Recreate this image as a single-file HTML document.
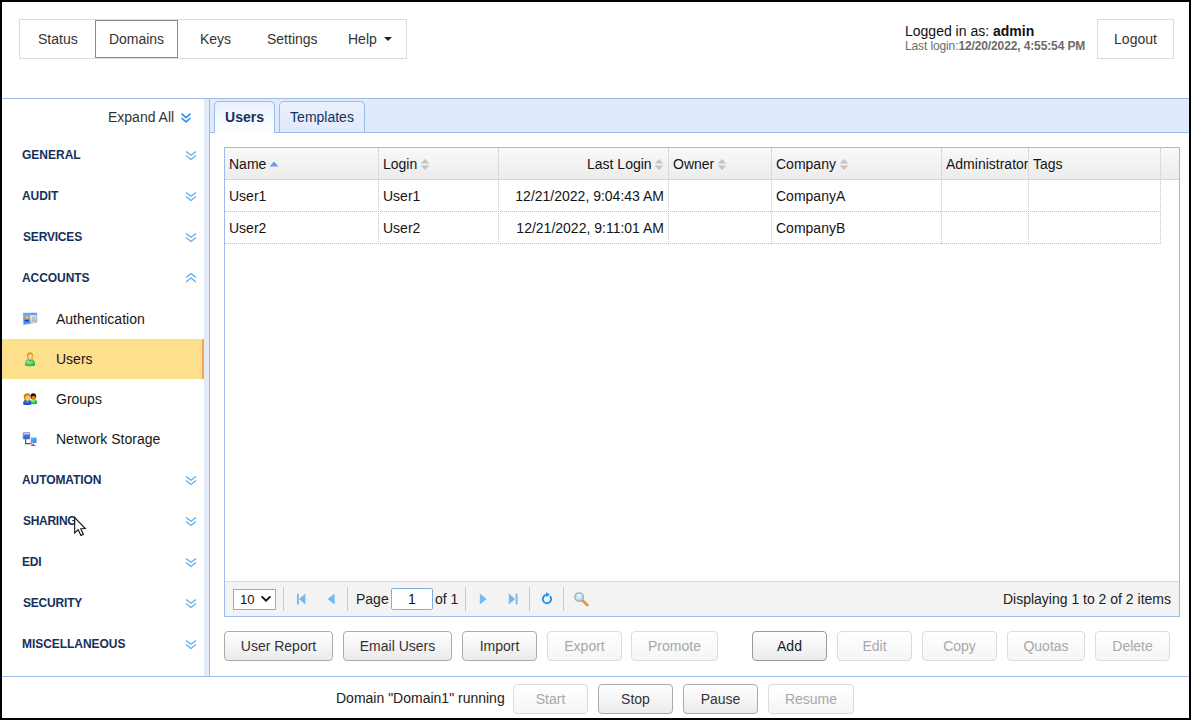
<!DOCTYPE html>
<html><head><meta charset="utf-8">
<style>
*{box-sizing:border-box;margin:0;padding:0}
html,body{width:1191px;height:720px;overflow:hidden;background:#fff}
body{font-family:"Liberation Sans",sans-serif;font-size:14px;color:#222;position:relative}
.abs{position:absolute}
#frame{position:absolute;left:0;top:0;width:1191px;height:720px;border:2px solid #000;z-index:50;pointer-events:none}
/* top nav */
#nav{left:19px;top:19px;width:388px;height:40px;border:1px solid #dcdcdc;background:#fff}
.nv{position:absolute;top:0;height:38px;line-height:38px;font-size:14px;color:#333;white-space:nowrap}
#dom{left:95px;top:20px;width:83px;height:38px;border:1px solid #8a8a8a;background:#fff;line-height:36px;text-align:center;font-size:14px;color:#333}
#logout{left:1097px;top:19px;width:77px;height:40px;border:1px solid #dcdcdc;line-height:38px;text-align:center;font-size:14px;color:#333}
#li1{left:905px;top:23px;font-size:14px;color:#111;white-space:nowrap;line-height:16px}
#li2{left:905px;top:39px;font-size:12px;color:#6c6c6c;white-space:nowrap;line-height:14px;letter-spacing:-0.12px}
/* lines */
#hline{left:2px;top:98px;width:1187px;height:1px;background:#9dbaec}
#split{left:204px;top:99px;width:5px;height:577px;background:#e3eaf8}
#vline{left:209px;top:99px;width:1px;height:577px;background:#9dbaec}
#fline{left:2px;top:676px;width:1187px;height:1px;background:#9dbaec}
/* sidebar */
.sec{position:absolute;left:22px;font-size:12px;font-weight:bold;color:#15305b;letter-spacing:0;white-space:nowrap;line-height:14px}
.item{position:absolute;left:56px;font-size:14px;color:#161616;white-space:nowrap;line-height:16px}
#sel{left:2px;top:339px;width:202px;height:40px;background:#fddf8c;border-right:2px solid #f9a44a}
.chev{position:absolute;left:185px;width:12px;height:12px}
/* tabs */
#strip{left:210px;top:99px;width:979px;height:33px;background:#dfeafc}
#strip2{left:210px;top:132px;width:979px;height:1px;background:#9dbaec}
.tab{position:absolute;top:101px;height:32px;border:1px solid #9dbaec;border-bottom:none;border-radius:5px 5px 0 0;font-size:14px;line-height:30px;text-align:center}
#t1{left:214px;width:61px;background:linear-gradient(#eaf1fd,#fff);font-weight:bold;color:#15305b;height:32px}
#t2{left:279px;width:86px;background:linear-gradient(#eaf1fd,#dfeafc);color:#15305b;height:31px}
/* grid */
#grid{left:224px;top:147px;width:956px;height:470px;border:1px solid #9dbaec;background:#fff}
#gh{left:225px;top:148px;width:954px;height:32px;background:linear-gradient(#f9f9f9,#ececec);border-bottom:1px solid #d5d5d5}
.th,.td{position:absolute;font-size:14px;color:#141414;white-space:nowrap;line-height:16px}
.vd{position:absolute;top:148px;width:0;height:96px;border-left:1px dotted #c4c4c4}
.hd{position:absolute;left:225px;width:936px;height:0;border-top:1px dotted #c4c4c4}
#pager{left:225px;top:581px;width:954px;height:35px;background:#f3f3f3;border-top:1px solid #dcdcdc}
.psep{position:absolute;top:587px;width:1px;height:24px;background:#c9c9c9}
.btn{position:absolute;height:30px;border:1px solid #ababab;border-radius:4px;background:linear-gradient(#fff,#ebebeb);font-size:14px;color:#333;text-align:center;line-height:29px;white-space:nowrap}
.btn.dis{border-color:#dcdcdc;color:#a8a8a8;background:linear-gradient(#fff,#f5f5f5)}
</style></head><body>
<div id="frame"></div>
<div id="nav" class="abs"></div>
<div class="nv" style="left:38px;top:20px">Status</div>
<div id="dom" class="abs">Domains</div>
<div class="nv" style="left:200px;top:20px">Keys</div>
<div class="nv" style="left:267px;top:20px">Settings</div>
<div class="nv" style="left:348px;top:20px">Help</div>
<div class="abs" style="left:384px;top:37px;width:0;height:0;border-left:4px solid transparent;border-right:4px solid transparent;border-top:4px solid #222"></div>
<div id="li1" class="abs">Logged in as: <b>admin</b></div>
<div id="li2" class="abs">Last login:<b>12/20/2022, 4:55:54 PM</b></div>
<div id="logout" class="abs">Logout</div>
<div id="hline" class="abs"></div>
<div id="split" class="abs"></div>
<div id="vline" class="abs"></div>
<div id="fline" class="abs"></div>

<div class="abs" style="left:108px;top:109px;font-size:14px;color:#333;line-height:16px">Expand All</div>
<div class="sec" style="top:148px">GENERAL</div>
<div class="sec" style="top:189px;letter-spacing:-0.1px">AUDIT</div>
<div class="sec" style="top:230px;left:23px;letter-spacing:-0.19px">SERVICES</div>
<div class="sec" style="top:271px;letter-spacing:-0.07px">ACCOUNTS</div>
<div id="sel" class="abs"></div>
<div class="item" style="top:311px">Authentication</div>
<div class="item" style="top:351px">Users</div>
<div class="item" style="top:391px">Groups</div>
<div class="item" style="top:431px">Network Storage</div>
<div class="sec" style="top:473px;letter-spacing:-0.1px">AUTOMATION</div>
<div class="sec" style="top:514px;left:23px;letter-spacing:-0.29px">SHARING</div>
<div class="sec" style="top:555px;letter-spacing:-0.27px">EDI</div>
<div class="sec" style="top:596px;left:23px;letter-spacing:-0.2px">SECURITY</div>
<div class="sec" style="top:637px;letter-spacing:-0.05px">MISCELLANEOUS</div>

<div id="strip" class="abs"></div>
<div id="strip2" class="abs"></div>
<div id="t1" class="tab">Users</div>
<div id="t2" class="tab">Templates</div>

<div id="grid" class="abs"></div>
<div id="gh" class="abs"></div>
<div id="pager" class="abs"></div>


<!-- sidebar icons -->
<svg class="abs" style="left:22px;top:311px" width="17" height="16" viewBox="0 0 17 16">
 <defs><linearGradient id="ga" x1="0" y1="0" x2="0" y2="1"><stop offset="0" stop-color="#8cc0fb"/><stop offset="1" stop-color="#3e82e6"/></linearGradient>
 <linearGradient id="gp" x1="0" y1="0" x2="1" y2="1"><stop offset="0" stop-color="#ffffff"/><stop offset="1" stop-color="#bdbdbd"/></linearGradient></defs>
 <path d="M1.3 2.2 L14.8 2 L14.9 11 L8 12.4 L1.6 13.6 Z" fill="url(#ga)" stroke="#6aa5f3" stroke-width=".6"/>
 <path d="M1.3 2.2 L14.8 2 L14.8 3.6 L1.3 3.8 Z" fill="#5b9cf3"/>
 <rect x="8.3" y="4.4" width="6.2" height="7.4" fill="url(#gp)"/>
 <path d="M9.5 6.3 H13 M9.5 8 H13 M9.5 9.7 H13" stroke="#9a9a9a" stroke-width=".8"/>
 <circle cx="4.9" cy="6.6" r="1.9" fill="#f59a12"/>
 <circle cx="5.2" cy="6.6" r="1" fill="#ffd089"/>
 <path d="M2.4 10.5 Q2.6 8.6 4.9 8.6 Q7.2 8.6 7.4 10.5 Z" fill="#1144b8"/>
</svg>
<svg class="abs" style="left:23px;top:350px" width="14" height="18" viewBox="0 0 14 18">
 <defs><radialGradient id="gb" cx=".4" cy=".35" r=".8"><stop offset="0" stop-color="#8ff59a"/><stop offset=".6" stop-color="#3fc355"/><stop offset="1" stop-color="#169a2c"/></radialGradient>
 <radialGradient id="gf" cx=".45" cy=".4" r=".7"><stop offset="0" stop-color="#ffe0c4"/><stop offset="1" stop-color="#f9a868"/></radialGradient></defs>
 <path d="M2 15.4 Q1.6 10 5 9.3 L9 9.3 Q12.4 10 12 15.4 Q7 17 2 15.4 Z" fill="url(#gb)"/>
 <path d="M4.6 9.4 L7 11.2 L9.4 9.4 L8.6 8.6 L5.4 8.6 Z" fill="#1f9e35"/>
 <ellipse cx="7" cy="5.9" rx="3.1" ry="3.6" fill="#d9a10c"/>
 <ellipse cx="7.3" cy="6.9" rx="2.3" ry="2.9" fill="url(#gf)"/>
 <path d="M5.6 9 L7 10.6 L8.4 9 Z" fill="#f7a461"/>
</svg>
<svg class="abs" style="left:22px;top:391px" width="17" height="16" viewBox="0 0 17 16">
 <defs><radialGradient id="gg2" cx=".4" cy=".3" r=".8"><stop offset="0" stop-color="#8ff59a"/><stop offset=".6" stop-color="#36c04c"/><stop offset="1" stop-color="#12922a"/></radialGradient>
 <radialGradient id="gbl" cx=".5" cy=".3" r=".8"><stop offset="0" stop-color="#3d7fe6"/><stop offset="1" stop-color="#0a3fb4"/></radialGradient></defs>
 <path d="M8.2 12.6 Q8 8.6 10.2 8.2 L13 8.2 Q15.3 8.6 15.1 12.6 Q11.6 13.8 8.2 12.6 Z" fill="url(#gg2)"/>
 <ellipse cx="11.3" cy="5.3" rx="2.8" ry="3" fill="#16161c"/>
 <ellipse cx="11.5" cy="6.5" rx="2" ry="2.2" fill="#d98a10"/>
 <path d="M8.8 4.6 Q11.3 2.6 14 4.8 L13.7 5.5 Q11.5 4.2 9.1 5.6 Z" fill="#0d0d12"/>
 <path d="M1.2 13.4 Q0.8 9.2 3.6 8.7 L6.8 8.7 Q9.6 9.2 9.2 13.4 Q5.2 14.8 1.2 13.4 Z" fill="url(#gbl)"/>
 <ellipse cx="5.2" cy="5.9" rx="3.5" ry="3.7" fill="#c98a0c"/>
 <ellipse cx="5.7" cy="6.9" rx="2.3" ry="2.5" fill="#ffc58f"/>
 <path d="M4.6 8.9 L5.6 10.6 L6.6 8.9 Z" fill="#f9a45e"/>
 <path d="M5 9.6 L5.6 11.4 L6.2 9.6 Z" fill="#bfe6ff"/>
</svg>
<svg class="abs" style="left:22px;top:430px" width="17" height="18" viewBox="0 0 17 18">
 <defs><linearGradient id="gs" x1="0" y1="0" x2="0" y2="1"><stop offset="0" stop-color="#9fb6ee"/><stop offset=".35" stop-color="#3b7de0"/><stop offset="1" stop-color="#2a64cf"/></linearGradient>
 <linearGradient id="gm" x1="0" y1="0" x2="1" y2="1"><stop offset="0" stop-color="#6cc0ff"/><stop offset="1" stop-color="#1c7af0"/></linearGradient></defs>
 <path d="M3.6 8.5 V13.6 H10" fill="none" stroke="#5a5a5a" stroke-width="1.2"/>
 <rect x="1.2" y="2.6" width="6.6" height="6.4" rx=".6" fill="url(#gs)" stroke="#7a6fc0" stroke-width=".7"/>
 <rect x="1.6" y="2.9" width="5.8" height="1.5" fill="#c9cff2"/>
 <rect x="10.4" y="13.4" width="1.6" height="2" fill="#777"/>
 <rect x="9" y="15.1" width="4.6" height="1" rx=".5" fill="#6a6a6a"/>
 <rect x="8.3" y="7.3" width="6.6" height="6.2" rx=".5" fill="#d8d2cc"/>
 <rect x="8.9" y="7.9" width="5.4" height="4.8" fill="url(#gm)"/>
</svg>
<!-- cursor -->
<svg class="abs" style="left:73px;top:516px;z-index:40" width="15" height="23" viewBox="0 0 15 23">
 <path d="M1.7 1.6 L1.7 16.9 L5.2 13.7 L7.9 19.6 L10.4 18.5 L7.8 12.7 L12.3 12.6 Z" fill="#fff" stroke="#111" stroke-width="1.1" stroke-linejoin="miter"/>
</svg>
<!-- chevrons -->
<svg class="chev" style="top:111.5px;left:180px" viewBox="0 0 12 12"><path d="M1.5 1.7 L6 5.6 L10.5 1.7 M1.5 6 L6 9.9 L10.5 6" fill="none" stroke="#2d8be6" stroke-width="1.6"/></svg>
<svg class="chev" style="top:149px" viewBox="0 0 12 12"><path d="M1 2.5 L6 6.3 L11 2.5 M1 6.6 L6 10.4 L11 6.6" fill="none" stroke="#5aabf0" stroke-width="1.2"/></svg>
<svg class="chev" style="top:190px" viewBox="0 0 12 12"><path d="M1 2.5 L6 6.3 L11 2.5 M1 6.6 L6 10.4 L11 6.6" fill="none" stroke="#5aabf0" stroke-width="1.2"/></svg>
<svg class="chev" style="top:231px" viewBox="0 0 12 12"><path d="M1 2.5 L6 6.3 L11 2.5 M1 6.6 L6 10.4 L11 6.6" fill="none" stroke="#5aabf0" stroke-width="1.2"/></svg>
<svg class="chev" style="top:272px" viewBox="0 0 12 12"><path d="M1 5.5 L6 1.5 L11 5.5 M1 10 L6 6 L11 10" fill="none" stroke="#5aa7ee" stroke-width="1.2"/></svg>
<svg class="chev" style="top:474px" viewBox="0 0 12 12"><path d="M1 2.5 L6 6.3 L11 2.5 M1 6.6 L6 10.4 L11 6.6" fill="none" stroke="#5aabf0" stroke-width="1.2"/></svg>
<svg class="chev" style="top:515px" viewBox="0 0 12 12"><path d="M1 2.5 L6 6.3 L11 2.5 M1 6.6 L6 10.4 L11 6.6" fill="none" stroke="#5aabf0" stroke-width="1.2"/></svg>
<svg class="chev" style="top:556px" viewBox="0 0 12 12"><path d="M1 2.5 L6 6.3 L11 2.5 M1 6.6 L6 10.4 L11 6.6" fill="none" stroke="#5aabf0" stroke-width="1.2"/></svg>
<svg class="chev" style="top:597px" viewBox="0 0 12 12"><path d="M1 2.5 L6 6.3 L11 2.5 M1 6.6 L6 10.4 L11 6.6" fill="none" stroke="#5aabf0" stroke-width="1.2"/></svg>
<svg class="chev" style="top:638px" viewBox="0 0 12 12"><path d="M1 2.5 L6 6.3 L11 2.5 M1 6.6 L6 10.4 L11 6.6" fill="none" stroke="#5aabf0" stroke-width="1.2"/></svg>

<!-- grid header -->
<div class="th" style="left:229px;top:156px">Name</div>
<div class="th" style="left:383px;top:156px">Login</div>
<div class="th" style="left:587px;top:156px">Last Login</div>
<div class="th" style="left:673px;top:156px">Owner</div>
<div class="th" style="left:776px;top:156px">Company</div>
<div class="th" style="left:946px;top:156px;width:82px;overflow:hidden">Administrator</div>
<div class="th" style="left:1033px;top:156px">Tags</div>
<!-- rows -->
<div class="td" style="left:229px;top:188px">User1</div>
<div class="td" style="left:383px;top:188px">User1</div>
<div class="td" style="left:464px;width:200px;text-align:right;top:188px">12/21/2022, 9:04:43 AM</div>
<div class="td" style="left:776px;top:188px">CompanyA</div>
<div class="td" style="left:229px;top:220px">User2</div>
<div class="td" style="left:383px;top:220px">User2</div>
<div class="td" style="left:464px;width:200px;text-align:right;top:220px">12/21/2022, 9:11:01 AM</div>
<div class="td" style="left:776px;top:220px">CompanyB</div>
<!-- dotted lines -->
<div class="vd" style="left:378px"></div>
<div class="vd" style="left:498px"></div>
<div class="vd" style="left:668px"></div>
<div class="vd" style="left:771px"></div>
<div class="vd" style="left:941px"></div>
<div class="vd" style="left:1028px"></div>
<div class="vd" style="left:1160px"></div>
<div class="hd" style="top:211px"></div>
<div class="hd" style="top:243px"></div>
<!-- sort icons -->
<svg class="abs" style="left:269px;top:160px" width="10" height="8" viewBox="0 0 10 8"><path d="M0.6 6.4 L5 1.6 L9.4 6.4 Z" fill="#6a9fe2"/></svg>
<svg class="abs sorti" style="left:420px;top:158px" width="10" height="13" viewBox="0 0 10 13"><path d="M0.6 5.6 L5 0.9 L9.4 5.6 Z M0.6 7.4 L5 12.1 L9.4 7.4 Z" fill="#c4c4c4"/></svg>
<svg class="abs sorti" style="left:654px;top:158px" width="10" height="13" viewBox="0 0 10 13"><path d="M0.6 5.6 L5 0.9 L9.4 5.6 Z M0.6 7.4 L5 12.1 L9.4 7.4 Z" fill="#c4c4c4"/></svg>
<svg class="abs sorti" style="left:717px;top:158px" width="10" height="13" viewBox="0 0 10 13"><path d="M0.6 5.6 L5 0.9 L9.4 5.6 Z M0.6 7.4 L5 12.1 L9.4 7.4 Z" fill="#c4c4c4"/></svg>
<svg class="abs sorti" style="left:839px;top:158px" width="10" height="13" viewBox="0 0 10 13"><path d="M0.6 5.6 L5 0.9 L9.4 5.6 Z M0.6 7.4 L5 12.1 L9.4 7.4 Z" fill="#c4c4c4"/></svg>

<!-- pager -->
<div class="abs" style="left:233px;top:589px;width:43px;height:21px;border:1px solid #86aee6;background:#fff"></div>
<div class="abs" style="left:240px;top:592px;font-size:13px;line-height:15px;color:#111">10</div>
<svg class="abs" style="left:260px;top:595px" width="12" height="8" viewBox="0 0 12 8"><path d="M1.6 1.4 L6 5.6 L10.4 1.4" fill="none" stroke="#111" stroke-width="1.9"/></svg>
<div class="psep" style="left:283px"></div>
<div class="psep" style="left:347px"></div>
<div class="psep" style="left:465px"></div>
<div class="psep" style="left:529px"></div>
<div class="psep" style="left:563px"></div>
<svg class="abs" style="left:296px;top:593px" width="11" height="12" viewBox="0 0 11 12"><path d="M1.9 0.6 V11.4" stroke="#76b9ee" stroke-width="1.9"/><path d="M9.4 0.6 L3 6 L9.4 11.4 Z" fill="#76b9ee"/></svg>
<svg class="abs" style="left:326px;top:593px" width="10" height="12" viewBox="0 0 10 12"><path d="M8.6 0.6 L1.6 6 L8.6 11.4 Z" fill="#76b9ee"/></svg>
<div class="abs" style="left:356px;top:591px;font-size:14px;line-height:16px;color:#222">Page</div>
<div class="abs" style="left:391px;top:588px;width:42px;height:22px;border:1px solid #86aee6;background:#fff;border-radius:2px;text-align:center;line-height:20px;font-size:14px;color:#111">1</div>
<div class="abs" style="left:435px;top:591px;font-size:14px;line-height:16px;color:#222">of 1</div>
<svg class="abs" style="left:478px;top:593px" width="10" height="12" viewBox="0 0 10 12"><path d="M1.8 0.6 L8.6 6 L1.8 11.4 Z" fill="#76b9ee"/></svg>
<svg class="abs" style="left:507px;top:593px" width="11" height="12" viewBox="0 0 11 12"><path d="M9.6 0.6 V11.4" stroke="#76b9ee" stroke-width="1.9"/><path d="M1.8 0.6 L8.2 6 L1.8 11.4 Z" fill="#76b9ee"/></svg>
<svg class="abs" style="left:540px;top:592px" width="14" height="14" viewBox="0 0 14 14"><path d="M10.1 4.2 A4.2 4.2 0 1 1 6.2 2.9" fill="none" stroke="#1c8fe8" stroke-width="1.8"/><path d="M5.8 0.3 L9.9 2.4 L6.6 4.9 Z" fill="#1c8fe8"/></svg>
<svg class="abs" style="left:573px;top:591px" width="16" height="16" viewBox="0 0 16 16"><defs><radialGradient id="gl" cx=".5" cy=".3" r=".7"><stop offset="0" stop-color="#f2f9ff"/><stop offset="1" stop-color="#9fd0fb"/></radialGradient></defs><path d="M9.6 9.8 L14.2 13.9" stroke="#d8692a" stroke-width="2.6" stroke-linecap="round"/><path d="M9.8 10 L14 13.7" stroke="#f6b21c" stroke-width="1.5" stroke-linecap="round"/><circle cx="6.1" cy="6.1" r="4.3" fill="url(#gl)" stroke="#a8a8a8" stroke-width="1.3"/></svg>
<div class="abs" style="left:971px;width:200px;text-align:right;top:591px;font-size:14px;line-height:16px;color:#222">Displaying 1 to 2 of 2 items</div>

<!-- buttons -->
<div class="btn" style="left:224px;top:631px;width:109px">User Report</div>
<div class="btn" style="left:343px;top:631px;width:109px">Email Users</div>
<div class="btn" style="left:462px;top:631px;width:75px">Import</div>
<div class="btn dis" style="left:547px;top:631px;width:75px">Export</div>
<div class="btn dis" style="left:631px;top:631px;width:87px">Promote</div>
<div class="btn" style="left:752px;top:631px;width:75px;color:#1a1a1a;border-color:#9a9a9a">Add</div>
<div class="btn dis" style="left:837px;top:631px;width:75px">Edit</div>
<div class="btn dis" style="left:922px;top:631px;width:75px">Copy</div>
<div class="btn dis" style="left:1007px;top:631px;width:78px">Quotas</div>
<div class="btn dis" style="left:1095px;top:631px;width:75px">Delete</div>
<!-- footer -->
<div class="abs" style="left:336px;top:690px;font-size:14px;line-height:16px;color:#222;white-space:nowrap">Domain "Domain1" running</div>
<div class="btn dis" style="left:513px;top:684px;width:75px">Start</div>
<div class="btn" style="left:598px;top:684px;width:75px">Stop</div>
<div class="btn" style="left:683px;top:684px;width:75px">Pause</div>
<div class="btn dis" style="left:768px;top:684px;width:86px">Resume</div>
</body></html>
